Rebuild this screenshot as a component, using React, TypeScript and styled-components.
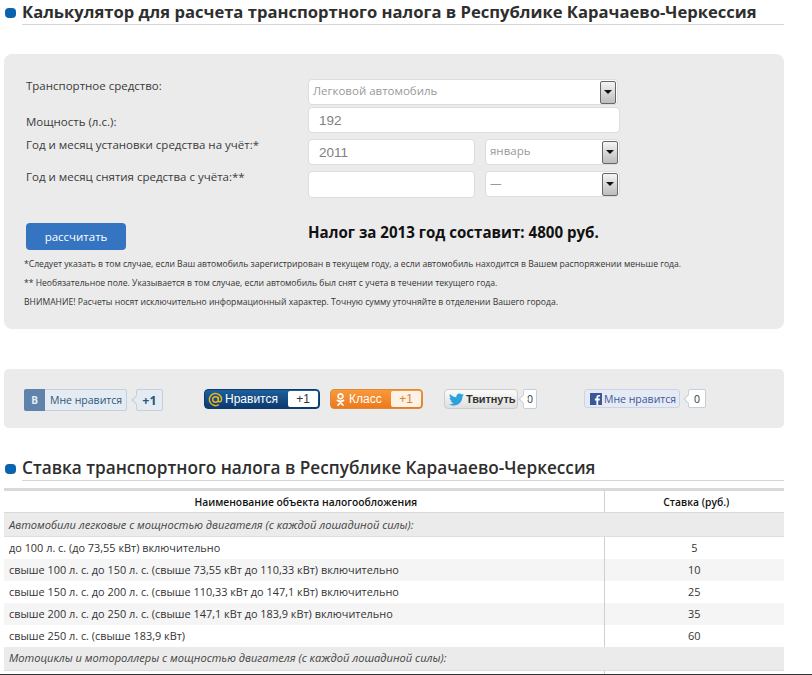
import React from "react";
import styled, { createGlobalStyle } from "styled-components";
import { FaTwitter, FaOdnoklassniki } from "react-icons/fa";

const Global = createGlobalStyle`
  html, body { margin: 0; padding: 0; background: #fff; }
  body { font-family: "Open Sans", "Noto Sans", sans-serif; color: #333; }
`;

const Page = styled.div`
  width: 812px;
  height: 675px;
  box-sizing: border-box;
  overflow: hidden;
  padding: 0 28px 0 4px;
  border-bottom: 1px solid #333;
`;

const Heading = styled.h2<{ $mt: number; $size: number; $weight: number }>`
  margin: ${(p) => p.$mt}px 0 0 18px;
  position: relative;
  height: 24px;
  font-size: ${(p) => p.$size}px;
  line-height: 24px;
  font-weight: ${(p) => p.$weight};
  color: #2e2e2e;
  border-bottom: 1px solid #d4d4d4;
  white-space: nowrap;
  &::before {
    content: "";
    position: absolute;
    left: -17px;
    top: 8px;
    width: 11px;
    height: 10px;
    border-radius: 4px;
    background: #0a63ae;
  }
`;

const Panel = styled.section`
  margin-top: 29px;
  height: 275px;
  box-sizing: border-box;
  padding: 25px 22px 0;
  background: #ebebeb;
  border-radius: 8px;
`;

const Form = styled.div`
  display: grid;
  grid-template-columns: 282px 312px;
  grid-auto-rows: min-content;
`;

const Label = styled.div<{ $pt: number }>`
  font-size: 11.5px;
  line-height: 14px;
  color: #3a3a3a;
  padding-top: ${(p) => p.$pt}px;
`;

const Controls = styled.div<{ $mt: number }>`
  display: flex;
  justify-content: space-between;
  margin-top: ${(p) => p.$mt}px;
`;

const Field = styled.div<{ $w: number; $h?: number }>`
  width: ${(p) => p.$w}px;
  height: ${(p) => p.$h ?? 26}px;
  box-sizing: border-box;
  display: flex;
  align-items: center;
  padding-left: 10px;
  background: #fff;
  border: 1px solid #dcdcdc;
  border-radius: 4px;
  font-family: "Liberation Sans", Arial, sans-serif;
  font-size: 13.5px;
  color: #808080;
`;

const SelectBox = styled(Field)`
  justify-content: space-between;
  padding-left: 4px;
  padding-right: 1px;
  font-family: "Open Sans", sans-serif;
  font-size: 11.5px;
  line-height: 14px;
  color: #999;
`;

const SelectText = styled.span`
  padding-bottom: 2px;
`;

const Arrow = styled.span`
  width: 16px;
  height: 23px;
  box-sizing: border-box;
  display: flex;
  align-items: flex-start;
  justify-content: center;
  padding-top: 8px;
  border: 1px solid #666;
  border-radius: 2px;
  background: linear-gradient(#f4f4f4, #bdbdbd);
  &::after {
    content: "";
    border-left: 4px solid transparent;
    border-right: 4px solid transparent;
    border-top: 4px solid #111;
  }
`;

const ResultRow = styled.div`
  display: grid;
  grid-template-columns: 282px 1fr;
  margin-top: 25px;
  height: 27px;
`;

const CalcButton = styled.div`
  width: 100px;
  height: 27px;
  display: flex;
  align-items: center;
  justify-content: center;
  background: #3574c0;
  border-radius: 4px;
  color: #fff;
  font-size: 11.5px;
`;

const Result = styled.div`
  font-size: 15.1px;
  line-height: 18px;
  font-weight: 700;
  color: #111;
  white-space: nowrap;
`;

const Notes = styled.div`
  margin: 8px 0 0 -2px;
  display: flex;
  flex-direction: column;
  gap: 7px;
`;

const Note = styled.p`
  margin: 0;
  font-size: 8.6px;
  line-height: 12px;
  color: #333;
  white-space: nowrap;
`;

const SocialPanel = styled.section`
  margin-top: 40px;
  height: 59px;
  box-sizing: border-box;
  padding: 20px 20px 0;
  display: flex;
  align-items: flex-start;
  background: #ebebeb;
  border-radius: 5px;
`;

const Group = styled.div<{ $ml?: number }>`
  display: flex;
  align-items: center;
  margin-left: ${(p) => p.$ml ?? 0}px;
`;

const VkLike = styled.div`
  width: 103px;
  height: 22px;
  box-sizing: border-box;
  display: flex;
  align-items: center;
  background: #e4ebf3;
  border: 1px solid #c3d0de;
  border-radius: 2px;
  font-size: 10.5px;
  color: #2b587a;
`;

const VkIcon = styled.span`
  width: 21px;
  height: 22px;
  margin: -1px 5px -1px -1px;
  display: flex;
  align-items: center;
  justify-content: center;
  flex: none;
  background: #5f83aa;
  border-radius: 2px 0 0 2px;
  font-size: 10px;
  font-weight: 700;
  color: #e6edf5;
`;

const Bubble = styled.div<{ $w: number; $h: number; $bg: string; $ml: number; $bold?: boolean; $color: string }>`
  position: relative;
  width: ${(p) => p.$w}px;
  height: ${(p) => p.$h}px;
  margin-left: ${(p) => p.$ml}px;
  box-sizing: border-box;
  display: flex;
  align-items: center;
  justify-content: center;
  background: ${(p) => p.$bg};
  border: 1px solid #c3cfdb;
  border-radius: 2px;
  font-size: ${(p) => (p.$bold ? 12.5 : 10.5)}px;
  font-weight: ${(p) => (p.$bold ? 700 : 400)};
  color: ${(p) => p.$color};
  &::before {
    content: "";
    position: absolute;
    left: -4px;
    top: 50%;
    width: 6px;
    height: 6px;
    transform: translateY(-50%) rotate(45deg);
    background: ${(p) => p.$bg};
    border-left: 1px solid #c3cfdb;
    border-bottom: 1px solid #c3cfdb;
  }
`;

const PillButton = styled.div<{ $w: number; $bg: string; $border: string; $ml: number }>`
  width: ${(p) => p.$w}px;
  height: 20px;
  margin-left: ${(p) => p.$ml}px;
  box-sizing: border-box;
  display: flex;
  align-items: center;
  padding: 1px 1px 1px 3px;
  border: 1px solid ${(p) => p.$border};
  border-radius: 4px;
  background: ${(p) => p.$bg};
  font-family: "Liberation Sans", Arial, sans-serif;
  font-size: 12px;
  color: #fff;
  white-space: nowrap;
`;

const PillLabel = styled.span`
  flex: 1;
  display: flex;
  align-items: center;
  gap: 2px;
`;

const PillCount = styled.span<{ $w: number; $color: string; $bg: string }>`
  width: ${(p) => p.$w}px;
  height: 16px;
  display: flex;
  align-items: center;
  justify-content: center;
  background: ${(p) => p.$bg};
  border-radius: 2px;
  color: ${(p) => p.$color};
  font-size: 12px;
`;

const TweetButton = styled.div`
  width: 74px;
  height: 20px;
  box-sizing: border-box;
  display: flex;
  align-items: center;
  gap: 2px;
  padding-left: 4px;
  border: 1px solid #ccc;
  border-radius: 4px;
  background: linear-gradient(#fbfbfb, #dfdfdf);
  font-family: "Liberation Sans", Arial, sans-serif;
  font-size: 11px;
  font-weight: 700;
  color: #333;
  letter-spacing: -0.1px;
`;

const FbLike = styled.div`
  width: 96px;
  height: 19px;
  box-sizing: border-box;
  display: flex;
  align-items: center;
  gap: 2px;
  padding-left: 5px;
  background: #e6eaf4;
  border: 1px solid #cad4e7;
  border-radius: 3px;
  font-size: 10.5px;
  color: #3b5998;
  white-space: nowrap;
`;

const RateTable = styled.table`
  width: 780px;
  margin-top: 7px;
  border-collapse: collapse;
  table-layout: fixed;
  border-top: 3px solid #d9d9d9;
  font-size: 10.9px;
  color: #333;
`;

const HeadCell = styled.th<{ $w: number }>`
  width: ${(p) => p.$w}px;
  height: 23px;
  box-sizing: border-box;
  padding: 0 0 0 4px;
  font-weight: 600;
  font-size: 10.3px;
  color: #111;
  text-align: center;
  border-bottom: 1px solid #d9d9d9;
  & + & { border-left: 1px solid #d0d0d0; }
`;

const Row = styled.tr<{ $shade: boolean }>`
  background: ${(p) => (p.$shade ? "#f5f5f5" : "#fff")};
`;

const Cell = styled.td`
  height: 22px;
  box-sizing: border-box;
  padding: 0 0 0 5px;
  white-space: nowrap;
`;

const RateCell = styled.td`
  height: 22px;
  box-sizing: border-box;
  padding: 0;
  text-align: center;
  border-left: 1px solid #d0d0d0;
`;

const GroupCell = styled.td`
  height: 24px;
  box-sizing: border-box;
  padding: 0 0 1px 5px;
  font-size: 11.1px;
  font-style: italic;
  background: #ebebeb;
  border-bottom: 1px solid #dedede;
  color: #444;
`;

const rows = [
  ["до 100 л. с. (до 73,55 кВт) включительно", "5"],
  ["свыше 100 л. с. до 150 л. с. (свыше 73,55 кВт до 110,33 кВт) включительно", "10"],
  ["свыше 150 л. с. до 200 л. с. (свыше 110,33 кВт до 147,1 кВт) включительно", "25"],
  ["свыше 200 л. с. до 250 л. с. (свыше 147,1 кВт до 183,9 кВт) включительно", "35"],
  ["свыше 250 л. с. (свыше 183,9 кВт)", "60"],
];

const FbIcon = () => (
  <svg width="12" height="12" viewBox="0 0 12 12" style={{ flex: "none" }}>
    <rect width="12" height="12" fill="#3b5998" />
    <path d="M8.2 12V7.4h1.5l.2-1.8H8.2V4.5c0-.5.2-.9.9-.9H10V2c-.3 0-.8-.1-1.300-.1-1.400 0-2.300.8-2.300 2.400v1.300H4.900v1.800h1.500V12z" fill="#fff" />
  </svg>
);

const AtIcon = () => (
  <svg width="15" height="15" viewBox="0 0 16 16" fill="none" stroke="#e6b422" strokeWidth="1.600" style={{ flex: "none" }}>
    <circle cx="8" cy="8" r="3" />
    <path d="M11 5v4.200c0 1.900 3.500 1.600 3.500-1.200A6.500 6.500 0 1 0 11.500 13.500" />
  </svg>
);

export default function App() {
  return (
    <>
      <Global />
      <Page>
        <Heading $mt={0} $size={16.6} $weight={700}>Калькулятор для расчета транспортного налога в Республике Карачаево-Черкессия</Heading>
        <Panel>
          <Form>
            <Label $pt={0}>Транспортное средство:</Label>
            <Controls $mt={0}>
              <SelectBox $w={310}><SelectText>Легковой автомобиль</SelectText><Arrow /></SelectBox>
            </Controls>
            <Label $pt={10}>Мощность (л.с.):</Label>
            <Controls $mt={2}>
              <Field $w={312}>192</Field>
            </Controls>
            <Label $pt={5}>Год и месяц установки средства на учёт:*</Label>
            <Controls $mt={6}>
              <Field $w={167}>2011</Field>
              <SelectBox $w={135}><SelectText>январь</SelectText><Arrow /></SelectBox>
            </Controls>
            <Label $pt={5}>Год и месяц снятия средства с учёта:**</Label>
            <Controls $mt={6}>
              <Field $w={167} $h={27} />
              <SelectBox $w={135}><SelectText>—</SelectText><Arrow /></SelectBox>
            </Controls>
          </Form>
          <ResultRow>
            <CalcButton>рассчитать</CalcButton>
            <Result>Налог за 2013 год составит: 4800 руб.</Result>
          </ResultRow>
          <Notes>
            <Note>*Следует указать в том случае, если Ваш автомобиль зарегистрирован в текущем году, а если автомобиль находится в Вашем распоряжении меньше года.</Note>
            <Note>** Необязательное поле. Указывается в том случае, если автомобиль был снят с учета в течении текущего года.</Note>
            <Note>ВНИМАНИЕ! Расчеты носят исключительно информационный характер. Точную сумму уточняйте в отделении Вашего города.</Note>
          </Notes>
        </Panel>
        <SocialPanel>
          <Group>
            <VkLike><VkIcon>В</VkIcon>Мне нравится</VkLike>
            <Bubble $w={27} $h={22} $bg="#e4ebf3" $ml={9} $bold $color="#2b587a">+1</Bubble>
          </Group>
          <PillButton $w={116} $bg="linear-gradient(#1d5f9c, #0c3a6e)" $border="#0c3a6e" $ml={41}>
            <PillLabel><AtIcon />Нравится</PillLabel>
            <PillCount $w={30} $color="#333" $bg="#fff">+1</PillCount>
          </PillButton>
          <PillButton $w={93} $bg="linear-gradient(#f9993a, #ec7a1c)" $border="#d98a3c" $ml={10}>
            <PillLabel><FaOdnoklassniki size={13} color="#fff" />Класс</PillLabel>
            <PillCount $w={30} $color="#d9832f" $bg="#fdf2e6">+1</PillCount>
          </PillButton>
          <Group $ml={21}>
            <TweetButton><FaTwitter size={15} color="#2aa3dc" />Твитнуть</TweetButton>
            <Bubble $w={14} $h={20} $bg="#fff" $ml={5} $color="#333">0</Bubble>
          </Group>
          <Group $ml={47}>
            <FbLike><FbIcon />Мне нравится</FbLike>
            <Bubble $w={18} $h={19} $bg="#fff" $ml={8} $color="#333">0</Bubble>
          </Group>
        </SocialPanel>
        <Heading $mt={28} $size={17.2} $weight={600}>Ставка транспортного налога в Республике Карачаево-Черкессия</Heading>
        <RateTable>
          <thead>
            <tr>
              <HeadCell $w={600}>Наименование объекта налогообложения</HeadCell>
              <HeadCell $w={180}>Ставка (руб.)</HeadCell>
            </tr>
          </thead>
          <tbody>
            <tr><GroupCell colSpan={2}>Автомобили легковые с мощностью двигателя (с каждой лошадиной силы):</GroupCell></tr>
            {rows.map(([name, rate], i) => (
              <Row key={name} $shade={i % 2 === 1}>
                <Cell>{name}</Cell>
                <RateCell>{rate}</RateCell>
              </Row>
            ))}
            <tr><GroupCell colSpan={2}>Мотоциклы и мотороллеры с мощностью двигателя (с каждой лошадиной силы):</GroupCell></tr>
            <Row $shade={false}>
              <Cell />
              <RateCell />
            </Row>
          </tbody>
        </RateTable>
      </Page>
    </>
  );
}
